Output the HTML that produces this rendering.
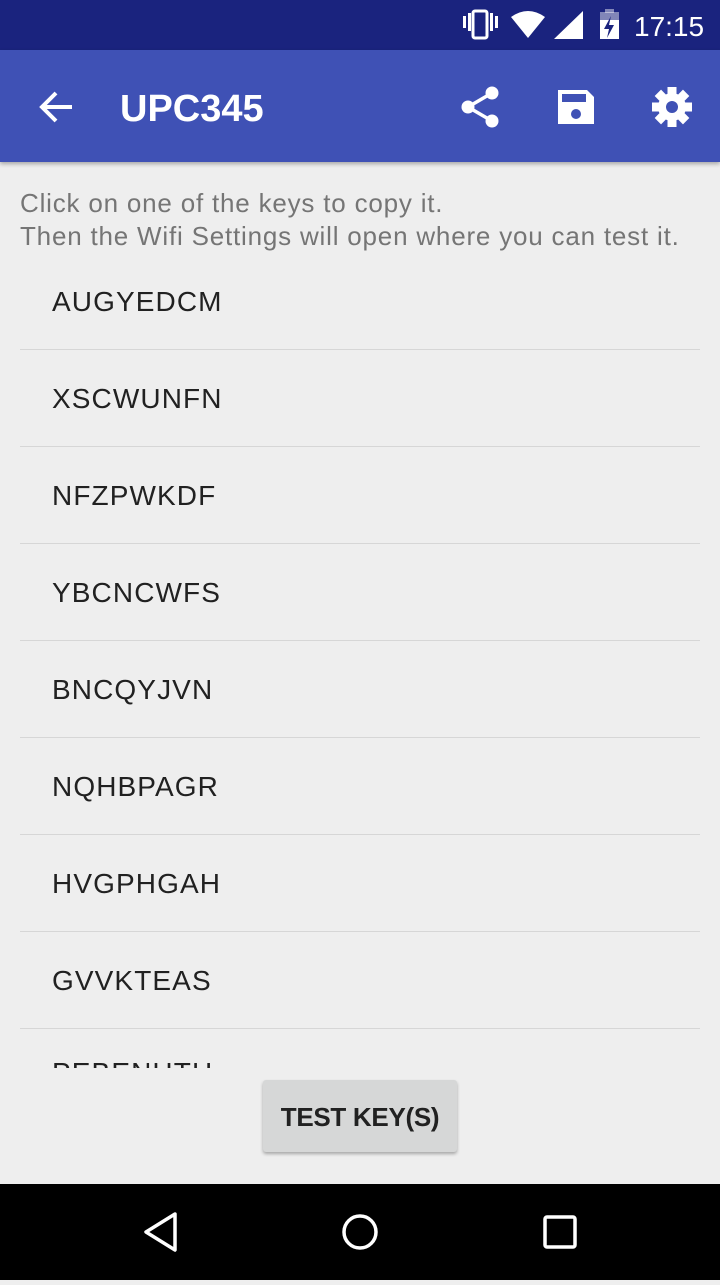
<!DOCTYPE html><html><head><style>
body{margin:0;width:720px;height:1280px;background:#eeeeee;font-family:"Liberation Sans",sans-serif;position:relative;overflow:hidden}
.sb{position:absolute;top:0;left:0;width:720px;height:50px;background:#1a237e}
.ab{position:absolute;top:50px;left:0;width:720px;height:112px;background:#3f51b5;box-shadow:0 2px 4px rgba(0,0,0,.3)}
.info{position:absolute;left:20px;top:187px;font-size:26px;line-height:33px;color:#757575;letter-spacing:0.8px;white-space:nowrap}
.list{position:absolute;left:20px;top:253px;width:680px;height:815px;overflow:hidden}
.it{height:95px;padding-top:1px;border-bottom:1px solid #d6d6d6;font-size:28px;color:#212121;line-height:96px;padding-left:32px;letter-spacing:1.1px}
.it.last{position:relative;top:-5px;border:none}
.btn{position:absolute;left:263px;top:1080px;width:194px;height:72px;background:#d6d7d7;border-radius:3px;box-shadow:0 2px 3px rgba(0,0,0,.3);font-size:26px;color:#212121;text-align:center;line-height:74px;font-weight:bold;letter-spacing:-0.3px}
.nav{position:absolute;top:1184px;left:0;width:720px;height:96px;background:#000}
</style></head><body>
<div class="sb">
<svg width="720" height="50" style="position:absolute;left:0;top:0">
<g fill="#fff">
<rect x="463" y="16" width="3" height="12"/><rect x="468" y="13" width="3" height="18"/>
<rect x="473" y="11" width="14" height="27" rx="2" fill="none" stroke="#fff" stroke-width="3"/>
<rect x="490" y="13" width="3" height="18"/><rect x="495" y="16" width="3" height="12"/>
<path d="M511 17 Q528 5 545 17 L528 38 Z"/>
<path d="M554 39 L583 11 L583 39 Z"/>
<rect x="600" y="12" width="19" height="27" fill="#fff" opacity=".45"/><rect x="605" y="9" width="9" height="4" opacity=".45"/>
<rect x="600" y="20" width="19" height="19"/>
<path d="M611 16 L604 29 L609 29 L607 38 L614 25 L609 25 Z" fill="#1a237e"/>
</g>
<text x="634" y="36" fill="#fff" font-size="28" font-family="Liberation Sans">17:15</text>
</svg></div>
<div class="ab">
<svg width="720" height="112" style="position:absolute;left:0;top:0">
<path d="M72 57 H42 M56 43 L42 57 L56 71" stroke="#fff" stroke-width="4" fill="none"/>
<text x="120" y="71" fill="#fff" font-size="38" font-weight="bold" font-family="Liberation Sans">UPC345</text>
<g fill="#fff">
<circle cx="492" cy="43" r="6.5"/><circle cx="468" cy="57" r="6.5"/><circle cx="492" cy="71" r="6.5"/>
<path d="M492 43 L468 57 L492 71" stroke="#fff" stroke-width="3.5" fill="none"/>
<path d="M558 40 H587 L594 47 V74 H558 Z"/>
<rect x="562" y="44" width="24" height="8" fill="#3f51b5"/>
<circle cx="576" cy="64" r="5" fill="#3f51b5"/>
<g transform="translate(672,57)">
<circle r="14"/>
<g id="t"><rect x="-4.5" y="-20" width="9" height="8"/></g>
<use href="#t" transform="rotate(45)"/><use href="#t" transform="rotate(90)"/><use href="#t" transform="rotate(135)"/><use href="#t" transform="rotate(180)"/><use href="#t" transform="rotate(225)"/><use href="#t" transform="rotate(270)"/><use href="#t" transform="rotate(315)"/>
<circle r="6" fill="#3f51b5"/>
</g></g></svg></div>
<div class="info">Click on one of the keys to copy it.<br>Then the Wifi Settings will open where you can test it.</div>
<div class="list">
<div class="it">AUGYEDCM</div><div class="it">XSCWUNFN</div><div class="it">NFZPWKDF</div><div class="it">YBCNCWFS</div><div class="it">BNCQYJVN</div><div class="it">NQHBPAGR</div><div class="it">HVGPHGAH</div><div class="it">GVVKTEAS</div><div class="it last">PEBENHTH</div>
</div>
<div class="btn">TEST KEY(S)</div>
<div class="nav"><svg width="720" height="96">
<path d="M175 30 L146 48 L175 66 Z" stroke="#fff" stroke-width="3.5" fill="none" stroke-linejoin="round"/>
<circle cx="360" cy="48" r="16" stroke="#fff" stroke-width="3.5" fill="none"/>
<rect x="545" y="33" width="30" height="30" rx="2" stroke="#fff" stroke-width="3.5" fill="none"/>
</svg></div>
</body></html>
